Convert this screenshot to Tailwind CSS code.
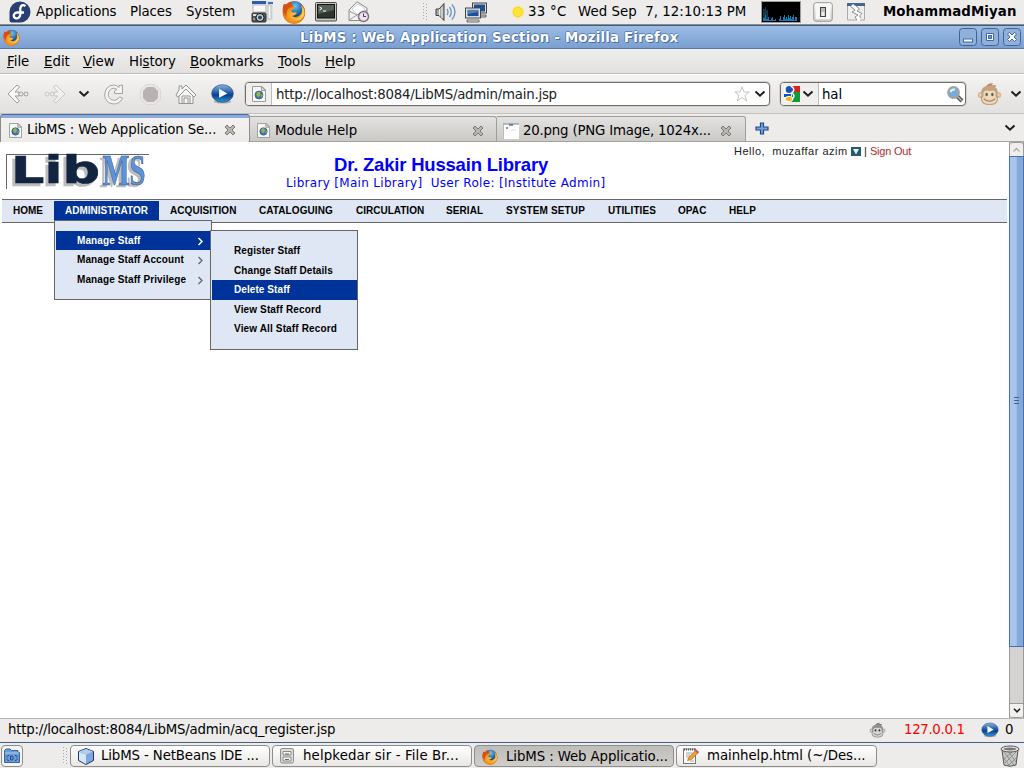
<!DOCTYPE html>
<html lang="en">
<head>
<meta charset="utf-8">
<title>LibMS : Web Application Section</title>
<script src="https://cdn.jsdelivr.net/npm/@tailwindcss/browser@4"></script>
</head>
<body class="w-[1024px] h-[768px] overflow-hidden bg-[#edeceb] text-black font-['DejaVu_Sans',sans-serif] text-[13.33px] leading-[18px] whitespace-nowrap">
<svg class="absolute w-0 h-0">
  <defs>
    <radialGradient id="orange" cx=".5" cy=".6" r=".6"><stop offset="0" stop-color="#ffc33c"/><stop offset=".6" stop-color="#f08a1c"/><stop offset="1" stop-color="#c8440c"/></radialGradient>
    <radialGradient id="globe" cx=".5" cy=".3" r=".7"><stop offset="0" stop-color="#6fc6f0"/><stop offset=".6" stop-color="#1f6fb8"/><stop offset="1" stop-color="#123a7c"/></radialGradient>
    <linearGradient id="blueball" x1="0" y1="0" x2="0" y2="1"><stop offset="0" stop-color="#8db4dc"/><stop offset=".45" stop-color="#1f5cae"/><stop offset=".6" stop-color="#0c3f8c"/><stop offset="1" stop-color="#2f9be0"/></linearGradient>
    <linearGradient id="sil" x1="0" y1="0" x2="0" y2="1"><stop offset="0" stop-color="#fff"/><stop offset="1" stop-color="#d0d0ce"/></linearGradient>
  </defs>
  <symbol id="firefox" viewBox="0 0 24 24">
    <circle cx="12" cy="12.5" r="11.2" fill="url(#orange)"/>
    <circle cx="13" cy="9.5" r="8.3" fill="url(#globe)"/>
    <path d="M2 4Q4 5 6 4.500Q8 2 10 2.500Q9 4.500 11 6L13 8Q11 9.500 9.500 10Q9 12 11 12.500Q14 12 15 13Q13 16 10 16Q15 19 19 14Q21 11 19 5Q24 10 22.500 16Q19 23.500 12 23.700Q3 23 1 14Q0 8 2 4Z" fill="url(#orange)"/>
    <path d="M19 5Q24 10 22 16Q18 22 11 20Q18 19 20 13Q21 9 19 5Z" fill="#fcc93c"/>
    <path d="M2 4Q4 5 6 4.500Q8 2 10 2.500Q9 4.500 11 6L7 8Q3 12 5 17Q1 13 1 9Z" fill="#d8500f"/>
  </symbol>
  <symbol id="page" viewBox="0 0 14 16">
    <path d="M.5.500H10L13.500 4V15.500H.500Z" fill="#f6f6f4" stroke="#9a9c97"/><path d="M9.500.500V4.500H13.500Z" fill="#ddd" stroke="#999"/>
    <circle cx="7" cy="9" r="4" fill="#3f74b4" stroke="#284d80" stroke-width=".6"/><path d="M5 6Q8 5 8.500 7T7 11Q4 10 4.500 8ZM9 8L11 9L9.500 12Z" fill="#9bb544"/>
  </symbol>
  <symbol id="chev" viewBox="0 0 12 8"><path d="M1.500 1.500L6 5.700L10.500 1.500" fill="none" stroke="#1c1c1c" stroke-width="2"/></symbol>
  <symbol id="x" viewBox="0 0 12 12"><path d="M1 3L3 1L6 4L9 1L11 3L8 6L11 9L9 11L6 8L3 11L1 9L4 6Z" fill="#b7b7b2" stroke="#777a74"/></symbol>
  <symbol id="play" viewBox="0 0 24 22">
    <ellipse cx="12" cy="19" rx="9" ry="2" fill="#777" opacity=".5"/><ellipse cx="12" cy="10.500" rx="11.300" ry="9.200" fill="url(#blueball)" stroke="#17427f" stroke-width=".7"/><path d="M8.500 5.500L17 10.500L8.500 15Z" fill="#fff"/>
  </symbol>
  <symbol id="monkey" viewBox="0 0 26 24">
    <path d="M9 5Q11 0 17 1L15 3L20 3L18 6Z" fill="#a4713f"/>
    <circle cx="4" cy="13" r="3.200" fill="#d3a67c"/><circle cx="22" cy="13" r="3.200" fill="#d3a67c"/><circle cx="4" cy="13" r="1.500" fill="#f0d5b4"/><circle cx="22" cy="13" r="1.500" fill="#f0d5b4"/>
    <path d="M4.500 13Q3 3.500 13 3.500Q23 3.500 21.500 13Q24 23.500 13 23.500Q2 23.500 4.500 13Z" fill="#b98a5e"/>
    <path d="M6.500 12Q7 7 13 9Q19 7 19.500 12Q18.500 14 21 17Q20 22.500 13 22.500Q6 22.500 5 17Q7.500 14 6.500 12Z" fill="#efd3ae"/>
    <ellipse cx="10" cy="12.500" rx="1.300" ry="1.800" fill="#2c3a2c"/><ellipse cx="16" cy="12.500" rx="1.300" ry="1.800" fill="#2c3a2c"/><path d="M7 17Q13 22 19 17" fill="none" stroke="#8f6643" stroke-width="1.200"/>
  </symbol>
</svg>

<!-- desktop panel -->
<div class="flex items-center h-[25px] pl-[9px] bg-[#edeceb] border-b border-[#8d8c7e]">
  <svg class="shrink-0 w-[22px] h-[22px] mr-[5px]" viewBox="0 0 22 22"><path d="M11 .500A10.500 10.500 0 1 1 11 21.500H2.500Q.500 21.500.500 19V11A10.500 10.500 0 0 1 11 .500Z" fill="#294172"/><path d="M16.500 5Q12 2.500 11.300 7.500V13.500Q10.500 18 7 17.300Q4 16.300 5 13.500Q6 11.300 8.500 11.500H15" fill="none" stroke="#fff" stroke-width="2.300"/></svg>
  <div class="w-[94px] shrink-0 tracking-[-0.08px]">Applications</div>
  <div class="w-[56px] shrink-0 tracking-[-0.1px]">Places</div>
  <div class="w-[65px] shrink-0 tracking-[-0.1px]">System</div>
  <svg class="shrink-0 w-[22px] h-[22px] mr-[9px]" viewBox="0 0 22 22"><rect x="1" y="0" width="21" height="20" fill="#dfe2e2"/><rect x="1" y="0" width="14" height="3" fill="#2b5ea4"/><rect x="17" y="1" width="5" height="2" fill="#3d70b4"/><path d="M2 4H15V11H2ZM17 4H20V18H17Z" fill="#f8f8f8" stroke="#bbb"/><rect x="1" y="12" width="14" height="9" rx="1" fill="#555753" stroke="#2e3436"/><rect x="2" y="13" width="4" height="2" fill="#ddd"/><circle cx="9" cy="16.500" r="4" fill="#cfd3cf" stroke="#111"/><circle cx="9" cy="16.500" r="2" fill="#24466e"/><path d="M2 18H4" stroke="#ddd"/></svg>
  <svg class="shrink-0 w-[24px] h-[24px] mr-[9px]"><use href="#firefox"/></svg>
  <svg class="shrink-0 w-[22px] h-[20px] mr-[11px]" viewBox="0 0 22 20"><rect x=".5" y=".5" width="21" height="18.500" rx="1" fill="#c5c7c2" stroke="#4b4d49"/><rect x="2.500" y="2.500" width="17" height="13.500" fill="#30352f" stroke="#111"/><path d="M3 3H19V8L3 12Z" fill="#566056"/><path d="M4.500 5L7 6.500L4.500 8M8 9H11" stroke="#fff" fill="none"/></svg>
  <svg class="shrink-0 w-[22px] h-[22px] mr-[52px]" viewBox="0 0 22 22"><path d="M1 9L9 .800L19 7V19.500H1Z" fill="#f2f2f0" stroke="#8c8e88"/><path d="M4 8L10 3L16 7V12L10 14Z" fill="#fff" stroke="#bbb" stroke-width=".6"/><path d="M1 10L9 14L1 19M9 14L19 9" fill="none" stroke="#999"/><circle cx="15.500" cy="15.500" r="5" fill="#eee3ee" stroke="#866c8a" stroke-width="1.500"/><path d="M15.500 12.500V15.500H18" stroke="#444" fill="none"/></svg>
  <svg class="shrink-0 w-[6px] h-[18px] mr-[7px]" viewBox="0 0 6 18"><path d="M1.500 0V18M4.500 1V18" stroke="#aaa9a5" stroke-dasharray="1 2"/></svg>
  <svg class="shrink-0 w-[22px] h-[20px] mr-[8px]" viewBox="0 0 22 20"><path d="M1 7H4L9 1.500V18.500L4 13.500H1Z" fill="#a7aaa4" stroke="#3f423e"/><path d="M4.500 7V13.500M7 5V16" stroke="#eee" fill="none"/><path d="M12 7Q14 10 12 13M14.500 5Q18 10 14.500 15M17 2.500Q23 10 17 17.500" fill="none" stroke="#6f96c4" stroke-width="1.400"/></svg>
  <svg class="shrink-0 w-[22px] h-[21px] mr-[24px]" viewBox="0 0 22 21"><rect x="7.500" y="1" width="14" height="10" fill="#ddd" stroke="#444"/><rect x="9" y="2.500" width="11" height="7" fill="#1f4f8d"/><path d="M14 13H21V15H14Z" fill="#ccc" stroke="#666"/><rect x=".5" y="6" width="15" height="10" fill="#e4e4e2" stroke="#444"/><rect x="2.500" y="7.800" width="11" height="6.300" fill="#204f91"/><path d="M3 8H13V10L3 12Z" fill="#5081bb"/><path d="M2 18H14V20H2Z" fill="#eee" stroke="#666"/></svg>
  <svg class="shrink-0 w-[14px] h-[14px] mr-[3px]" viewBox="0 0 14 14"><circle cx="7" cy="7" r="6.500" fill="#fbe993"/><circle cx="7" cy="7" r="4.800" fill="#fbe636" stroke="#efc62b" stroke-width=".7"/></svg>
  <div class="w-[50px] shrink-0 tracking-[0.3px]">33 °C</div>
  <div class="w-[183px] shrink-0 whitespace-pre tracking-[0.04px]">Wed Sep  7, 12:10:13 PM</div>
  <svg class="shrink-0 w-[40px] h-[22px] mr-[12px]" viewBox="0 0 40 22"><rect x=".5" y=".5" width="39" height="21" fill="#000" stroke="#9d9c96"/><path d="M2 8H4V6H5V9H7V18H2Z" fill="#10384c"/><path d="M2 20V17H4V14H5V18H7V16H8V19H10V17H11V16H12V19H14V18H15V20H18V18H19V15H20V19H22V16H23V14H24V18H25V16H26V18H27V14H28V17H29V15H30V18H31V16H32V14H33V19H34V16H36V20Z" fill="#1377b8"/></svg>
  <svg class="shrink-0 w-[20px] h-[20px] mr-[14px]" viewBox="0 0 20 20"><rect x=".7" y=".7" width="18.600" height="18.600" rx="2.500" fill="url(#sil)" stroke="#999a96"/><rect x="3" y="3" width="14" height="14" fill="#f7f7f5"/><rect x="7.500" y="5.500" width="5" height="9" fill="#bbb" stroke="#444"/><rect x="8.500" y="10" width="3" height="4" fill="#eee"/></svg>
  <svg class="shrink-0 w-[18px] h-[18px] mr-[18px]" viewBox="0 0 18 18"><path d="M.5.500H17.500V17H.500Z" fill="#eee" stroke="#aaa"/><path d="M0 0H18V3H0Z" fill="#41659b"/><path d="M5 2L9.500 6.500L7 8L13 11L10 13L12 18" fill="none" stroke="#fff" stroke-width="3"/><path d="M3.500 3.500L8 7L5 9L11 12L8 14L10 17M8 2L12.500 6L10 8L15 10.500L12.500 13L14 15" fill="none" stroke="#8c8c8a"/></svg>
  <div class="font-bold tracking-[0.1px]">MohammadMiyan</div>
</div>

<!-- window title -->
<div class="flex items-center h-[24px] pl-[3px] border-t border-t-[#3f5d84] border-b border-b-[#5077a9] bg-linear-to-b from-[#9bbce6] to-[#7a9fd0]">
  <svg class="w-[17px] h-[17px] shrink-0 mr-[280px]"><use href="#firefox"/></svg>
  <div class="w-[659px] shrink-0 pt-px font-bold tracking-[0.2px] text-white [text-shadow:1px_1px_0_#4a6fa3,-1px_0_0_#5e83b7,0_-1px_0_#5e83b7]">LibMS : Web Application Section - Mozilla Firefox</div>
  <svg class="w-[62px] h-[18px] shrink-0" viewBox="0 0 62 18"><g fill="#8fb0db" stroke="#42648f"><rect x=".5" y=".5" width="17" height="17" rx="3"/><rect x="22.500" y=".5" width="17" height="17" rx="3"/><rect x="44.500" y=".5" width="17" height="17" rx="3"/></g><g fill="#fff" stroke="#3f69a6"><rect x="4.500" y="11" width="9" height="3"/><path d="M27.500 5.500H34.500V12.500H27.500Z"/><path d="M29.500 7.500H32.500V10.500H29.500Z" fill="#7298cc"/><path d="M48.500 6L50.500 4.500L53 7L55.500 4.500L57.500 6L55 9L57.500 11.500L55.500 13.500L53 11L50.500 13.500L48.500 11.500L51 9Z"/></g></svg>
</div>

<!-- menu bar -->
<div class="flex items-center h-[25px] pl-[7px] pt-px border-b border-[#bdbbb8] bg-linear-to-b from-[#efeeed] to-[#e3e1df]">
  <div class="w-[37px]"><u>F</u>ile</div><div class="w-[39px]"><u>E</u>dit</div><div class="w-[46px]"><u>V</u>iew</div><div class="w-[61px] tracking-[-0.1px]">Hi<u>s</u>tory</div><div class="w-[88px] tracking-[-0.1px]"><u>B</u>ookmarks</div><div class="w-[47px]"><u>T</u>ools</div><div><u>H</u>elp</div>
</div>

<!-- navigation bar -->
<div class="flex items-center h-[40px] pl-[7px] border-t border-white border-b border-b-[#c4c2bf] bg-linear-to-b from-[#f4f3f2] to-[#e2e0de]">
  <svg class="shrink-0 w-[22px] h-[20px] mr-[15px]" viewBox="0 0 22 20"><path d="M10 1L1 10L10 19L12.500 17L8 12H12V8H8L12.500 3Z" fill="#f8f8f6" stroke="#9c9e99"/><circle cx="14" cy="10" r="2" fill="#eee" stroke="#9c9e99"/><circle cx="19" cy="10" r="2" fill="#eee" stroke="#9c9e99"/></svg>
  <svg class="shrink-0 w-[22px] h-[20px] mr-[12px] opacity-50" viewBox="0 0 22 20"><path d="M12 1L21 10L12 19L9.500 17L14 12H10V8H14L9.500 3Z" fill="#f8f8f6" stroke="#a5a5a5"/><circle cx="8" cy="10" r="2" fill="#eee" stroke="#a5a5a5"/><circle cx="3" cy="10" r="2" fill="#eee" stroke="#a5a5a5"/></svg>
  <svg class="shrink-0 w-[12px] h-[8px] mr-[14px]"><use href="#chev"/></svg>
  <svg class="shrink-0 w-[20px] h-[21px] mr-[16px]" viewBox="0 0 20 21"><path d="M15 1.500L18.500 1V9.500H10.500V7L13 5.500Q9 2.500 5.500 6.500Q2.500 12 7 15.500Q12 18 15.500 13L18.500 14Q16 20 9.500 20Q1 19 .700 11Q1 2 9.500 1Q13 1 15 3.500Z" fill="#f3f3f1" stroke="#a3a5a0"/></svg>
  <svg class="shrink-0 w-[21px] h-[21px] mr-[14px]" viewBox="0 0 21 21"><path d="M6 .500H15L20.500 6V15L15 20.500H6L.500 15V6Z" fill="#e8e7e5" stroke="#dad8d6"/><path d="M7 3H14L18 7V14L14 18H7L3 14V7Z" fill="#b9b2b1"/></svg>
  <svg class="shrink-0 w-[22px] h-[21px] mr-[14px]" viewBox="0 0 22 21"><path d="M4 6V2H7V5L11 1L21 11L19 13L18 12V19.500H4V12L2.500 13L1 11Z" fill="#f7f7f5" stroke="#92948f"/><path d="M4 12L11 5L18 12M7 19V12H15V19M9 19V14H13V19" fill="none" stroke="#92948f"/></svg>
  <svg class="shrink-0 w-[23px] h-[22px] mr-[11px]"><use href="#play"/></svg>
  <div class="flex items-center shrink-0 w-[525px] h-[24px] mr-[10px] border border-[#6d6c6a] rounded-[4px] bg-white shadow-[0_0_0_1px_#d5d3d0]">
    <div class="flex items-center justify-center w-[26px] h-full bg-[#f0efee] border-r border-[#bebcb9] rounded-l-[3px] mr-[4px]"><svg class="w-[14px] h-[16px]"><use href="#page"/></svg></div>
    <div class="w-[458px] pt-px tracking-[-0.23px] text-[#222]">http://localhost:8084/LibMS/admin/main.jsp</div>
    <svg class="shrink-0 w-[16px] h-[16px] mr-[4px]" viewBox="0 0 16 16"><path d="M8 .800L10 6H15.300L11 9.300L12.700 15L8 11.500L3.300 15L5 9.300L.700 6H6Z" fill="#fff" stroke="#c3c3c3"/></svg>
    <svg class="shrink-0 w-[12px] h-[8px]"><use href="#chev"/></svg>
  </div>
  <div class="flex items-center shrink-0 w-[186px] h-[24px] mr-[11px] border border-[#6d6c6a] rounded-[4px] bg-white shadow-[0_0_0_1px_#d5d3d0]">
    <div class="flex items-center w-[38px] h-full bg-[#f0efee] border-r border-[#bebcb9] rounded-l-[3px] pl-[3px] mr-[3px] gap-[2px]"><svg class="shrink-0 w-[16px] h-[16px]" viewBox="0 0 16 16"><path d="M0 0H16V16H0Z" fill="#fff"/><path d="M8 0H16V6H8Z" fill="#dd1f1f"/><path d="M9 6H16V16H6L8 9Z" fill="#109a3c"/><path d="M0 8H7V11H0Z" fill="#1554bc"/><ellipse cx="5" cy="3.500" rx="3.300" ry="3.500" fill="#1554bc"/><ellipse cx="5" cy="13" rx="4" ry="2.600" fill="#f8b51b" stroke="#fff"/><path d="M7 0Q12 3 8 7Q12 10 8 13" stroke="#fff" stroke-width="1.500" fill="none"/></svg><svg class="shrink-0 w-[12px] h-[8px]"><use href="#chev"/></svg></div>
    <div class="w-[125px] pt-px tracking-[-0.1px]">hal</div>
    <svg class="shrink-0 w-[17px] h-[17px]" viewBox="0 0 17 17"><path d="M10 10L15 15" stroke="#565854" stroke-width="4"/><path d="M10.500 10.500L14.500 14.500" stroke="#bbb" stroke-width="1.500"/><circle cx="6.500" cy="6.500" r="5.500" fill="#79aadd" stroke="#a0a29d" stroke-width="1.800"/><path d="M3.500 6Q4.500 3 8 3.500" stroke="#e5f1fb" stroke-width="2" fill="none"/></svg>
  </div>
  <svg class="shrink-0 w-[25px] h-[24px] mr-[8px] opacity-75"><use href="#monkey"/></svg>
  <svg class="shrink-0 w-[12px] h-[8px]"><use href="#chev"/></svg>
</div>

<!-- tab strip -->
<div class="flex items-end h-[28px] border-b border-[#a5a3a0] bg-[#edeceb]">
  <div class="flex items-center shrink-0 w-[250px] h-[28px] -mb-px pl-[8px] pt-[3px] border-t border-x border-t-[#48699a] border-x-[#8e8c89] rounded-t-[3px] bg-[linear-gradient(#8cabdc_0,#8cabdc_3px,#f2f1f0_3px,#edeceb_100%)]">
    <svg class="shrink-0 w-[13px] h-[15px] mr-[5px]"><use href="#page"/></svg><div class="w-[197px] tracking-[-0.16px]">LibMS : Web Application Se...</div><svg class="shrink-0 w-[12px] h-[12px]"><use href="#x"/></svg>
  </div>
  <div class="flex items-center shrink-0 w-[247px] h-[25px] pl-[7px] pt-[3px] border-t border-r border-[#a09e9b] rounded-tr-[3px] bg-linear-to-b from-[#e4e2e0] to-[#cbc9c6]">
    <svg class="shrink-0 w-[13px] h-[15px] mr-[5px]"><use href="#page"/></svg><div class="w-[197px] tracking-[-0.1px]">Module Help</div><svg class="shrink-0 w-[12px] h-[12px]"><use href="#x"/></svg>
  </div>
  <div class="flex items-center shrink-0 w-[249px] h-[25px] pl-[6px] pt-[3px] mr-[9px] border-t border-r border-[#a09e9b] rounded-tr-[3px] bg-linear-to-b from-[#e4e2e0] to-[#cbc9c6]">
    <svg class="shrink-0 w-[16px] h-[16px] mr-[4px]" viewBox="0 0 16 16"><path d="M0 0H16V16H0Z" fill="#fff"/><path d="M0 1H16" stroke="#5d83b9"/><path d="M0 .300H16M.3 0V16" stroke="#aaa"/><path d="M6 2H10M3 5H5" stroke="#333"/><path d="M8 7H13" stroke="#ddd"/></svg><div class="w-[197px] tracking-[-0.2px]">20.png (PNG Image, 1024x...</div><svg class="shrink-0 w-[12px] h-[12px]"><use href="#x"/></svg>
  </div>
  <svg class="shrink-0 w-[14px] h-[13px] mr-[235px] mb-[6px]" viewBox="0 0 14 13"><path d="M5.500 1H8.500V5H13V8H8.500V12H5.500V8H1V5H5.500Z" fill="#7aa3dc" stroke="#204a87" stroke-width="1.200"/></svg>
  <svg class="shrink-0 w-[12px] h-[8px] mb-[9px]"><use href="#chev"/></svg>
</div>

<!-- page -->
<div class="flex h-[576px] bg-white">
  <div class="w-[1009px] shrink-0 font-['Liberation_Sans',Arial,sans-serif] text-[11px]">
    <div class="flex h-[57px]">
      <div class="flex shrink-0 w-[143px] h-[35px] mt-[12px] ml-[6px] mr-px border-t border-l border-[#666]">
        <svg class="shrink-0 w-[91px] h-[34px] overflow-visible" viewBox="0 0 91 34"><text class="drop-shadow-[-3px_3px_0_#bcbcbc]" x="4" y="28" textLength="89" lengthAdjust="spacingAndGlyphs" font-family="DejaVu Sans" font-weight="bold" font-size="36.5" fill="#12243f" stroke="#12243f" stroke-width=".6">Lib</text></svg>
        <svg class="shrink-0 w-[51px] h-[34px] overflow-visible" viewBox="0 0 51 34"><text class="drop-shadow-[-3px_2px_0_#bcbcbc]" x="4.500" y="30" textLength="43" lengthAdjust="spacingAndGlyphs" font-family="Liberation Serif" font-weight="bold" font-size="44" fill="#5b93dc" stroke="#35527c" stroke-width=".6">MS</text></svg>
      </div>
      <div class="w-[584px] shrink-0 pt-[13px] pl-[136px] text-[#00f]">
        <div class="pl-[48px] font-bold text-[18.500px] leading-[20px] tracking-[-0.2px]">Dr. Zakir Hussain Library</div>
        <div class="pt-px font-['DejaVu_Sans',sans-serif] text-[12px] leading-[15px] whitespace-pre tracking-[0.31px]">Library [Main Library]  User Role: [Institute Admin]</div>
      </div>
      <div class="flex items-center h-[18px] text-[#222]"><div class="w-[117px] shrink-0 whitespace-pre tracking-[0.5px]">Hello,  muzaffar azim</div><svg class="w-[10px] h-[9px] mr-[3px]" viewBox="0 0 10 9"><path d="M0 0H10V9H0Z" fill="#255c70"/><path d="M2 2H8L5 7.500Z" fill="#e4f4f8"/></svg><div class="w-[6px]">|</div><div class="text-[#b22c2c] tracking-[-0.22px]">Sign Out</div></div>
    </div>
    <div class="relative flex h-[24px] ml-[2px] w-[1005px] pt-[1px] border-y border-[#666] bg-[#e0e7f4] font-bold text-[10px] leading-[20px] tracking-[0.08px]">
      <div class="w-[52px] pl-[11px] tracking-normal">HOME</div><div class="w-[105px] h-[19px] leading-[19px] pl-[11px] bg-[#039] text-white tracking-normal">ADMINISTRATOR</div><div class="w-[89px] pl-[11px]">ACQUISITION</div><div class="w-[97px] pl-[11px]">CATALOGUING</div><div class="w-[90px] pl-[11px] tracking-normal">CIRCULATION</div><div class="w-[60px] pl-[11px]">SERIAL</div><div class="w-[102px] pl-[11px] tracking-[0.15px]">SYSTEM SETUP</div><div class="w-[70px] pl-[11px]">UTILITIES</div><div class="w-[51px] pl-[11px]">OPAC</div><div class="pl-[11px]">HELP</div>
      <!-- drop-down menu -->
      <div class="absolute left-[52px] top-[20px] w-[158px] h-[80px] pt-[10px] pl-px border border-[#666] bg-[#e0e7f4] leading-[19px] tracking-[0.11px]">
        <div class="flex items-center h-[19px] pl-[21px] bg-[#039] text-white"><div class="w-[120px]">Manage Staff</div><svg class="w-[7px] h-[9px] mt-[2px]" viewBox="0 0 7 9"><path d="M1.500 1L5 4.500L1.500 8" fill="none" stroke="#fff" stroke-width="1.500"/></svg></div>
        <div class="flex items-center h-[19px] pl-[21px]"><div class="w-[120px]">Manage Staff Account</div><svg class="w-[7px] h-[9px] mt-[2px]" viewBox="0 0 7 9"><path d="M1.500 1L5 4.500L1.500 8" fill="none" stroke="#666" stroke-width="1.300"/></svg></div>
        <div class="flex items-center h-[20px] pl-[21px] pt-px"><div class="w-[120px]">Manage Staff Privilege</div><svg class="w-[7px] h-[9px] mt-[2px]" viewBox="0 0 7 9"><path d="M1.500 1L5 4.500L1.500 8" fill="none" stroke="#666" stroke-width="1.300"/></svg></div>
      </div>
      <div class="absolute left-[208px] top-[30px] w-[148px] h-[120px] pt-[10px] pl-px border border-[#666] bg-[#e0e7f4] tracking-[0.14px]">
        <div class="h-[19px] leading-[19px] pl-[22px] tracking-[0.08px]">Register Staff</div>
        <div class="h-[20px] leading-[22px] pl-[22px] tracking-[0.08px]">Change Staff Details</div>
        <div class="h-[20px] leading-[19px] pl-[22px] bg-[#039] text-white tracking-[0.08px]">Delete Staff</div>
        <div class="h-[19px] pl-[22px]">View Staff Record</div>
        <div class="h-[20px] pl-[22px]">View All Staff Record</div>
      </div>
    </div>
  </div>
  <div class="flex flex-col w-[15px] bg-[#d5d3d1] border-x border-[#9b9996]">
    <div class="flex items-center justify-center h-[14px] rounded-t-[3px] border-t border-[#9b9996] bg-[#efeeed]"><svg class="w-[7px] h-[5px]" viewBox="0 0 7 5"><path d="M.5 4.500L3.500 1.500L6.500 4.500" stroke="#aaa" fill="none" stroke-width="1.300"/></svg></div>
    <div class="flex items-center justify-center h-[491px] -mx-px border border-[#4a70a8] bg-linear-to-r from-[#a8c5ee] from-45% to-[#84a8dc] to-60%"><svg class="w-[5px] h-[7px] -mt-[2px]" viewBox="0 0 5 7"><path d="M0 .500H5M0 3.500H5M0 6.500H5" stroke="#42648f"/></svg></div>
    <div class="h-[56px]"></div>
    <div class="flex items-center justify-center h-[15px] rounded-b-[3px] border-y border-[#9b9996] bg-[#f1f0ef]"><svg class="w-[8px] h-[5px]" viewBox="0 0 8 5"><path d="M1 .800L4 3.800L7 .800" stroke="#222" fill="none" stroke-width="1.600"/></svg></div>
  </div>
</div>

<!-- status bar -->
<div class="flex items-center h-[24px] pl-[8px] pb-px border-t border-[#b9b7b4]">
  <div class="w-[861px] shrink-0 tracking-[-0.215px]">http://localhost:8084/LibMS/admin/acq_register.jsp</div>
  <svg class="shrink-0 w-[17px] h-[16px] mr-[18px] grayscale"><use href="#monkey"/></svg>
  <div class="w-[77px] shrink-0 text-[#f00] tracking-[-0.33px]">127.0.0.1</div>
  <svg class="shrink-0 w-[18px] h-[16px] mr-[6px]"><use href="#play"/></svg>
  <div>0</div>
</div>

<!-- task bar -->
<div class="flex items-start h-[26px] pl-[1px] pt-[2px] border-t border-[#426088]">
  <div class="flex items-center justify-center shrink-0 w-[22px] h-[22px] mr-[39px] border border-[#8f8d8a] rounded-[4px] bg-[#f4f4f3]"><svg class="w-[16px] h-[16px]" viewBox="0 0 16 16"><path d="M.5 2.500L2 1H6L7.500 2.500H14V4.500H15.500V14.500H.500Z" fill="#6c9cd6" stroke="#3465a4"/><path d="M1 5H15" stroke="#a9c9ee"/><path d="M5 7.500H3V12.500H5M11 7.500H13V12.500H11" stroke="#204a87" fill="none" stroke-dasharray="1.500 1"/><path d="M6.500 8H8.500Q10 10 8.500 12H6.500Z" stroke="#204a87" fill="none"/></svg></div>
  <svg class="shrink-0 w-[6px] h-[18px] mt-[2px] mr-[2px]" viewBox="0 0 6 18"><path d="M1.500 0V18M4.500 1V18" stroke="#aaa9a5" stroke-dasharray="1 2"/></svg>
  <div class="flex items-center shrink-0 w-[200px] h-[22px] mr-[2px] pl-[7px] border border-[#8f8d8a] rounded-[4px] bg-linear-to-b from-white to-[#e8e7e5]"><svg class="shrink-0 w-[16px] h-[17px] mr-[7px]" viewBox="0 0 16 17"><path d="M8 .500L15.500 3.500V12.500L8 16.500L.500 12.500V3.500Z" fill="#7fa7de" stroke="#25336d"/><path d="M1 4L8 6.500V16L1 12Z" fill="#d5e8f6"/><path d="M1 3.500L8 1L15 3.500L8 6.500Z" fill="#b3cdee"/></svg><span class="tracking-[-0.13px]">LibMS - NetBeans IDE ...</span></div>
  <div class="flex items-center shrink-0 w-[200px] h-[22px] mr-[2px] pl-[7px] border border-[#8f8d8a] rounded-[4px] bg-linear-to-b from-white to-[#e8e7e5]"><svg class="shrink-0 w-[14px] h-[16px] mr-[9px]" viewBox="0 0 14 16"><rect x=".5" y=".5" width="13" height="14.500" rx="1.500" fill="#dddeda" stroke="#8c8e89"/><path d="M3 3.500H11V7H3ZM3 9H11V13H3Z" fill="#f5f5f3" stroke="#888a85"/><path d="M5 6H9M5 11.500H9" stroke="#666"/></svg><span class="tracking-[0.12px]">helpkedar sir - File Br...</span></div>
  <div class="flex items-center shrink-0 w-[200px] h-[22px] mr-[2px] pl-[7px] pt-px border border-[#8f8d8a] rounded-[4px] bg-linear-to-b from-[#bfbdba] to-[#d0cecb]"><svg class="shrink-0 w-[16px] h-[16px] mr-[8px]"><use href="#firefox"/></svg><span class="tracking-[-0.1px]">LibMS : Web Applicatio...</span></div>
  <div class="flex items-center shrink-0 w-[201px] h-[22px] mr-[123px] pl-[6px] border border-[#8f8d8a] rounded-[4px] bg-linear-to-b from-white to-[#e8e7e5]"><svg class="shrink-0 w-[16px] h-[16px] mr-[8px]" viewBox="0 0 16 16"><rect x=".5" y="1" width="12" height="14.500" fill="#fafafa" stroke="#777"/><path d="M1 1.500H12" stroke="#555" stroke-width="2" stroke-dasharray="1"/><path d="M3 5H9M3 7H7M3 9H6M7 13H11" stroke="#aaa"/><path d="M4.500 12.500L6 9L13 2L15.500 4.500L8.500 11.500Z" fill="#f0a030" stroke="#a06418" stroke-width=".6"/><path d="M12 3L13.500 1.500L16 4L14.500 5.500Z" fill="#e05050"/></svg><span class="tracking-[-0.06px]">mainhelp.html (~/Des...</span></div>
  <svg class="shrink-0 w-[20px] h-[22px]" viewBox="0 0 20 22"><path d="M2 5H18L16 20Q10 22.500 4 20Z" fill="#c7c9c5" stroke="#555"/><path d="M4 7L14 20M8 6L16 17M3 12L9 20M16 7L5 18M12 7L4 14M17 12L9 20" stroke="#777" stroke-width=".7"/><ellipse cx="10" cy="4" rx="9" ry="3" fill="#e8e8e6" stroke="#555"/><ellipse cx="10" cy="4" rx="6.500" ry="1.500" fill="#777"/></svg>
</div>
</body>
</html>
